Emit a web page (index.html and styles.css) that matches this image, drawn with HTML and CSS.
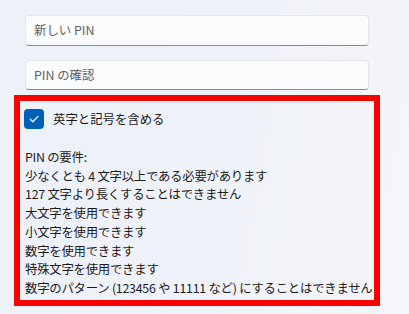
FILE: index.html
```html
<!DOCTYPE html>
<html lang="ja">
<head>
<meta charset="utf-8">
<link rel="stylesheet" href="styles.css">
</head>
<body>
<div class="page">
  <div class="field">新しい PIN</div>
  <div class="field second">PIN の確認</div>
  <section class="highlight">
    <label class="check-row">
      <span class="checkbox">
        <svg width="12" height="12" viewBox="0 0 12 12"><path d="M2.2 6.3 L4.8 8.8 L9.9 3.4" fill="none" stroke="#fff" stroke-width="1.3" stroke-linecap="round" stroke-linejoin="round"/></svg>
      </span>
      <span class="check-label">英字と記号を含める</span>
    </label>
    <div class="reqs">
      <div>PIN の要件:</div>
      <div>少なくとも 4 文字以上である必要があります</div>
      <div>127 文字より長くすることはできません</div>
      <div>大文字を使用できます</div>
      <div>小文字を使用できます</div>
      <div>数字を使用できます</div>
      <div>特殊文字を使用できます</div>
      <div>数字のパターン (123456 や 11111 など) にすることはできません</div>
    </div>
  </section>
</div>
</body>
</html>
```

FILE: styles.css
```css
html, body {
  margin: 0;
  padding: 0;
}
body {
  width: 409px;
  height: 314px;
  overflow: hidden;
  background: linear-gradient(100deg, #edf1f8 0%, #eff2f8 55%, #f5f6f9 100%);
  font-family: "Noto Sans CJK JP", "Noto Sans", sans-serif;
  color: #1b1b1b;
}
.page {
  padding-top: 15px;
  display: flex;
  flex-direction: column;
}
.field {
  box-sizing: border-box;
  margin-left: 25px;
  width: 344px;
  height: 31px;
  background: #fbfcfe;
  border: 1px solid #e3e5ea;
  border-bottom: 1px solid #8a8a8a;
  border-radius: 4px;
  font-size: 12.4px;
  line-height: 29px;
  padding-left: 8px;
  color: #5f5f5f;
}
.field.second {
  margin-top: 14px;
  height: 30px;
  line-height: 28px;
}
.highlight {
  box-sizing: border-box;
  margin-top: 5px;
  margin-left: 14px;
  width: 366px;
  height: 211px;
  border: 6px solid #ff0000;
  padding: 8px 0 0 4px;
}
.check-row {
  display: flex;
  align-items: center;
  gap: 9px;
  height: 20px;
}
.checkbox {
  width: 20px;
  height: 20px;
  border-radius: 4px;
  background: #005fb8;
  display: flex;
  align-items: center;
  justify-content: center;
}
.check-label {
  font-size: 12.4px;
  color: #1b1b1b;
}
.reqs {
  margin-top: 19px;
  margin-left: 1px;
  font-size: 12.4px;
  line-height: 18.7px;
  letter-spacing: -0.25px;
  color: #1b1b1b;
  white-space: nowrap;
}
```
